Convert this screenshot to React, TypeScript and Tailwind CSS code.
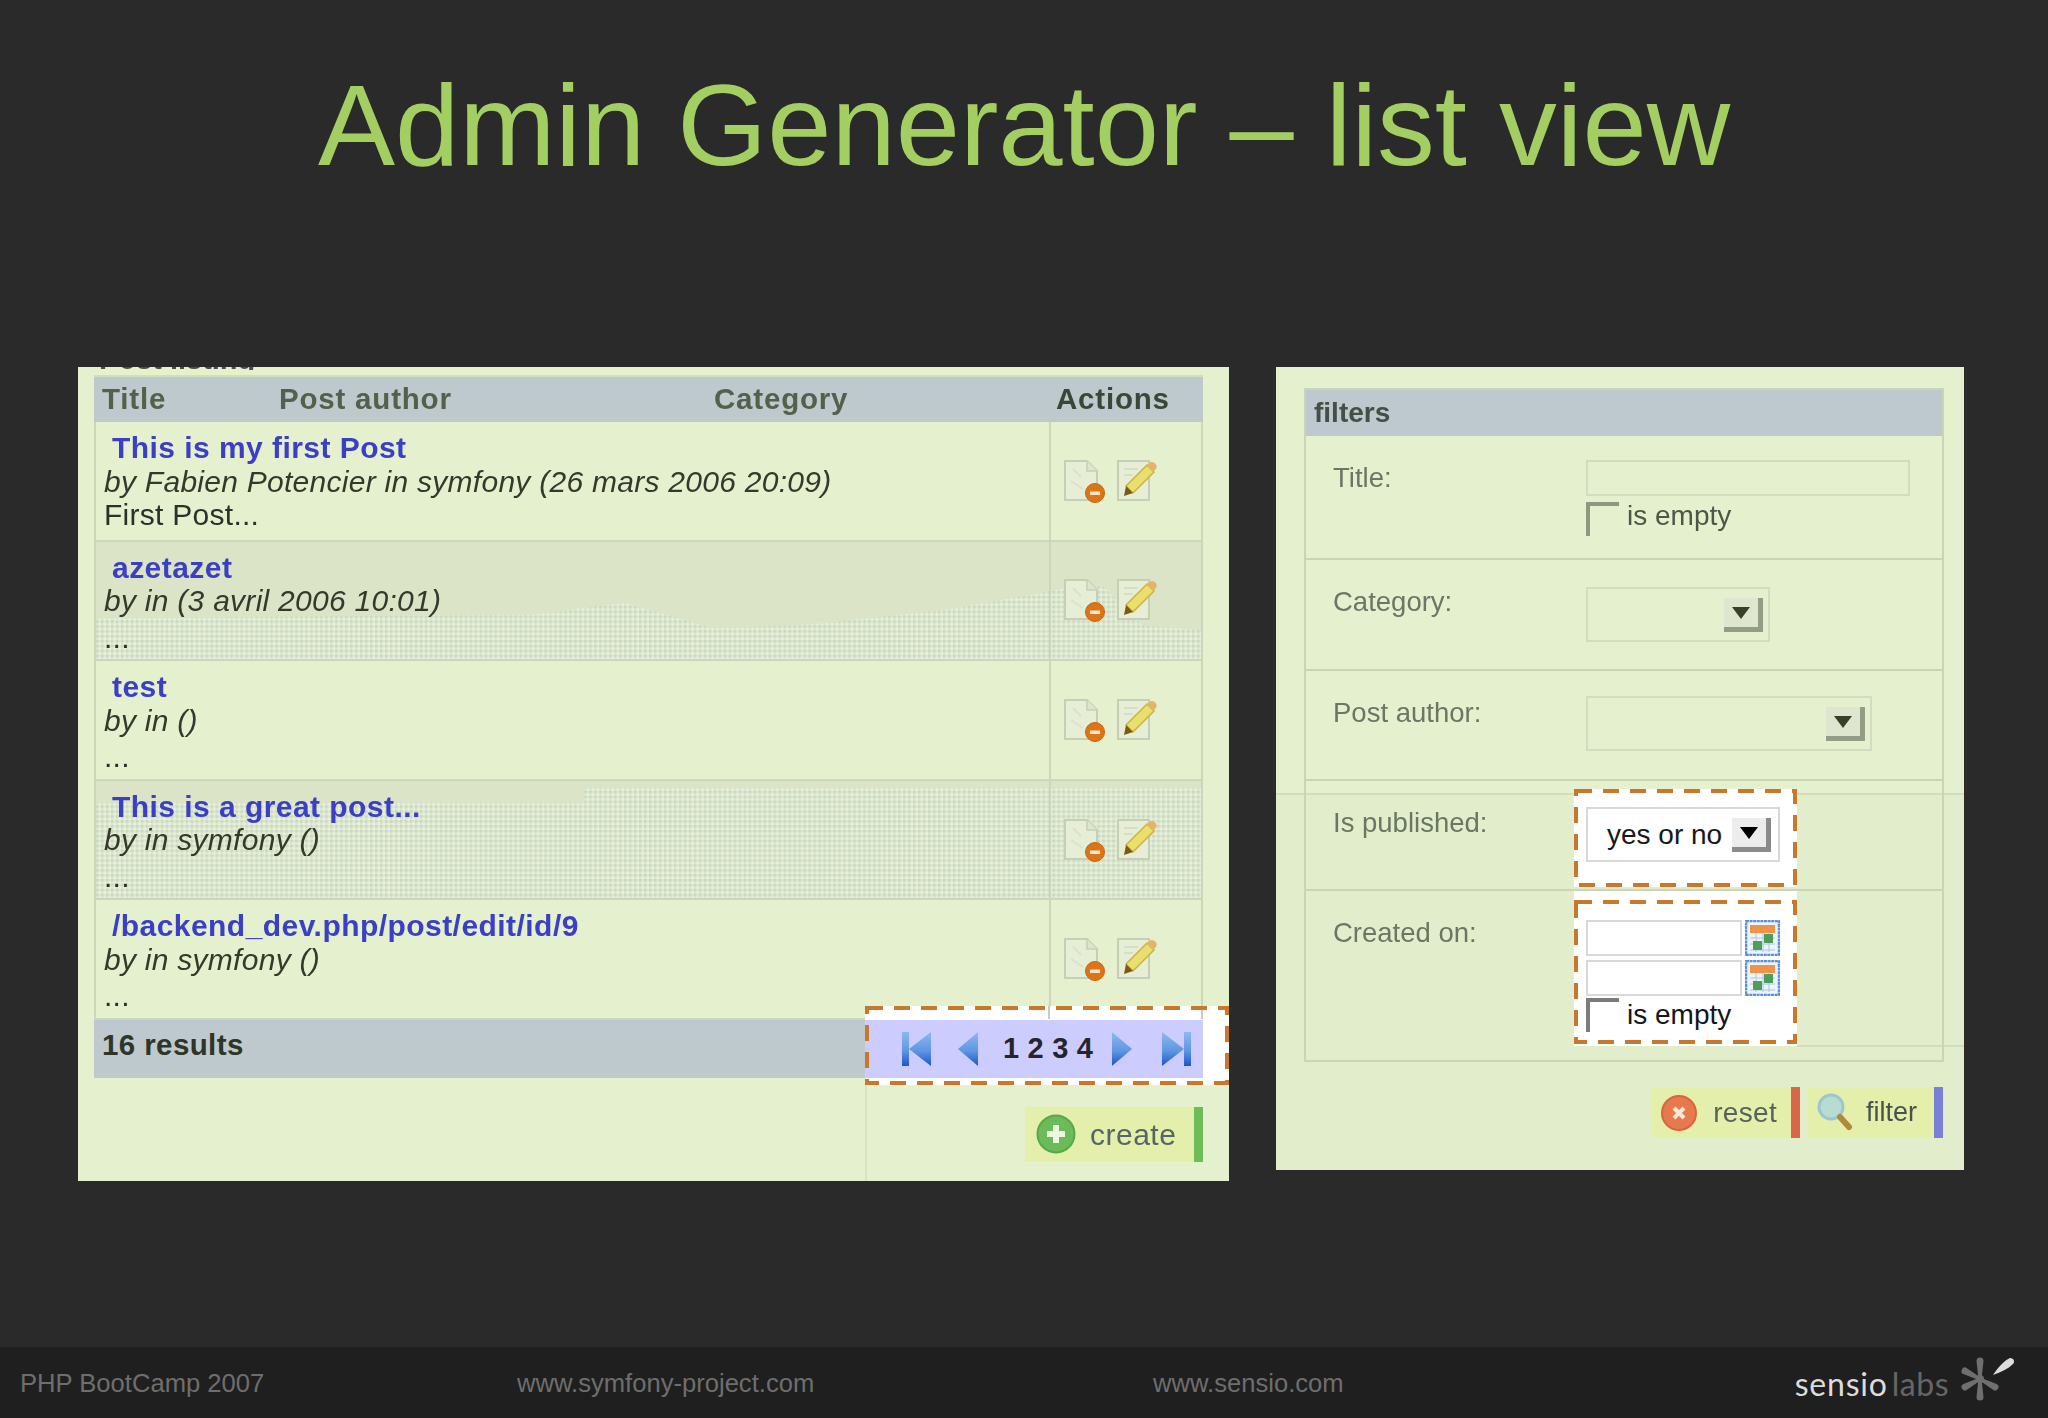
import React from "react";

const posts = [
  { title: "This is my first Post", meta: "by Fabien Potencier in symfony (26 mars 2006 20:09)", body: "First Post...", alt: false },
  { title: "azetazet", meta: "by in (3 avril 2006 10:01)", body: "...", alt: true, dither: "0,78 440,74 530,62 620,88 720,84 860,68 970,48 1010,45 1050,85 1109,90 1109,120 0,120" },
  { title: "test", meta: "by in ()", body: "...", alt: false },
  { title: "This is a great post...", meta: "by in symfony ()", body: "...", alt: true, dither: "0,22 490,22 490,7 1109,7 1109,119 0,119" },
  { title: "/backend_dev.php/post/edit/id/9", meta: "by in symfony ()", body: "...", alt: false },
];

function Dither({ points, id }: { points: string; id: string }) {
  return (
    <svg className="absolute inset-0 h-full w-full" viewBox="0 0 1109 120" preserveAspectRatio="none">
      <defs>
        <pattern id={id} width="5" height="5" patternUnits="userSpaceOnUse">
          <rect width="5" height="5" fill="#dce7cd" />
          <rect width="2.5" height="2.5" fill="#c9d7c0" />
          <rect x="2.5" y="2.5" width="2.5" height="2.5" fill="#e9f1dd" />
        </pattern>
      </defs>
      <polygon points={points} fill={`url(#${id})`} />
    </svg>
  );
}

function DeleteIcon() {
  return (
    <svg width="42" height="44" viewBox="0 0 42 44">
      <path d="M2 2h22l10 10v29H2z" fill="#e6eed6" stroke="#c6ceb6" strokeWidth="2" />
      <path d="M24 2v10h10" fill="#dde5cb" stroke="#c6ceb6" strokeWidth="1.5" />
      <path d="M10 10l8 8M8 22l12 8" stroke="#dae2ca" strokeWidth="2" />
      <circle cx="32" cy="34" r="9.5" fill="#dc7518" stroke="#c9640f" />
      <rect x="27" y="32.5" width="10" height="3.5" fill="#f6e6c8" />
    </svg>
  );
}

function EditIcon() {
  return (
    <svg width="44" height="44" viewBox="0 0 44 44">
      <path d="M2 2h31v39H2z" fill="#e6eed6" stroke="#c6ceb6" strokeWidth="2" />
      <path d="M8 10h14M8 16h9" stroke="#d6dec6" strokeWidth="2" />
      <path d="M10 27L31 6l7 7-21 21z" fill="#e8e06a" stroke="#cdb048" strokeWidth="1.5" />
      <path d="M31 6l3-2.5c2-1 5 0 6 2s1 3-.5 5L37 13z" fill="#e3b56a" />
      <path d="M10 27l7 7-9 3z" fill="#7a5a14" />
    </svg>
  );
}

function PagerIcon({ kind }: { kind: "first" | "prev" | "next" | "last" }) {
  const flip = kind === "next" || kind === "last";
  const withBar = kind === "first" || kind === "last";
  return (
    <svg width={withBar ? 29 : 20} height="36" viewBox={withBar ? "0 0 29 36" : "0 0 20 36"}>
      <defs>
        <linearGradient id={`pg-${kind}`} x1="0" y1="0" x2="0" y2="1">
          <stop offset="0" stopColor="#8cb8ee" />
          <stop offset="0.55" stopColor="#5f97e4" />
          <stop offset="1" stopColor="#1e55c8" />
        </linearGradient>
      </defs>
      <g transform={flip ? (withBar ? "translate(29 0) scale(-1 1)" : "translate(20 0) scale(-1 1)") : undefined} fill={`url(#pg-${kind})`}>
        {withBar ? (
          <>
            <rect x="0" y="1" width="7" height="34" />
            <polygon points="29,1 29,35 7,18" />
          </>
        ) : (
          <polygon points="20,1 20,35 0,18" />
        )}
      </g>
    </svg>
  );
}

function Dashes({ w, h }: { w: number; h: number }) {
  return (
    <svg className="pointer-events-none absolute left-0 top-0" width={w} height={h}>
      <rect x="2" y="2" width={w - 4} height={h - 4} fill="none" stroke="#c8782c" strokeWidth="4" strokeDasharray="16 11" />
    </svg>
  );
}

function SelectBox({ w, white, label }: { w: string; white?: boolean; label?: string }) {
  return (
    <div className={`flex h-[55px] items-center border-2 ${w} ${white ? "border-[#d8d8d8] bg-white pr-[7px]" : "border-[#d2dcc0] pr-[5px]"}`}>
      {label && <span className="pl-[19px] text-[28px] text-[#16181c]">{label}</span>}
      <div className={`ml-auto flex h-[34px] w-[39px] items-center justify-center border-b-[5px] border-r-[5px] ${white ? "border-[#8a8a8a] bg-[#ececec]" : "border-[#959c86] bg-[#dfe6cf]"}`}>
        <svg width="18" height="13" viewBox="0 0 18 13">
          <polygon points="0,1 18,1 9,13" fill={white ? "#000" : "#3a4026"} />
        </svg>
      </div>
    </div>
  );
}

function EmptyCheck({ white, raised }: { white?: boolean; raised?: boolean }) {
  return (
    <div className="flex items-center">
      <div className={`h-[34px] w-[33px] border-l-4 border-t-4 ${white ? "border-[#7c7c7c]" : "border-[#8f9780]"}`} />
      <span className={`ml-2 text-[28px] leading-[34px] ${raised ? "pb-[5px]" : ""} ${white ? "text-[#14161c]" : "text-[#4c5748]"}`}>is empty</span>
    </div>
  );
}

function CalendarIcon() {
  return (
    <svg width="35" height="36" viewBox="0 0 35 36">
      <rect x="1" y="1" width="33" height="34" fill="#eef4fb" stroke="#5d8fd8" strokeWidth="2.5" strokeDasharray="3 0.6" />
      <rect x="5" y="5" width="25" height="8" fill="#f0934a" />
      <path d="M5 18h25M5 24h25M5 30h25M11 13v19M18 13v19M24 13v19" stroke="#aac6e8" strokeWidth="1" />
      <rect x="19" y="14" width="9" height="9" fill="#4c9e58" />
      <rect x="8" y="21" width="9" height="9" fill="#4c9e58" />
    </svg>
  );
}

function ActionButton({ label, width, stripe, textClass, icon }: { label: string; width: string; stripe: string; textClass: string; icon: React.ReactNode }) {
  return (
    <div className={`flex h-[51px] items-center bg-[#e4efab] pl-[9px] ${width}`}>
      {icon}
      <span className={`ml-auto ${textClass}`}>{label}</span>
      <div className={`h-full w-[9px] ${stripe}`} />
    </div>
  );
}

function FilterRow({ label, height, children, last }: { label: string; height: string; children: React.ReactNode; last?: boolean }) {
  return (
    <div className={`grid grid-cols-[253px_1fr] pl-[27px] ${height} ${last ? "" : "border-b-2 border-[#c9d5b6]"}`}>
      <div className="pt-[25px] text-[27.5px] leading-[34px] text-[#6b7664]">{label}</div>
      <div>{children}</div>
    </div>
  );
}

export default function App() {
  return (
    <div className="flex h-[1418px] w-[2048px] flex-col overflow-hidden bg-[#2a2a2a] font-['Liberation_Sans',Arial,sans-serif]">
      <h1 className="h-[367px] pt-[67px] text-center text-[115.5px] font-normal leading-[116px] text-[#a3cf62]">
        Admin Generator – list view
      </h1>

      <div className="flex flex-1 items-start gap-[47px] pl-[78px]">
        {/* list panel */}
        <div className="h-[814px] w-[1151px] overflow-hidden bg-[#e5f0cf]">
          <div className="relative h-full blur-[0.6px]">
            <div className="ml-[21px] h-[3px] overflow-hidden">
              <span className="-mt-[23px] block text-[29px] font-bold leading-[30px] text-[#44503e]">Post listing</span>
            </div>
            <div className="ml-4 mt-[5px] w-[1109px] border-t-2 border-[#d3debb]">
              <div className="grid h-[45px] grid-cols-[177px_435px_342px_147px] items-center bg-[#bdc9cc] pl-2 text-[29.5px] font-bold tracking-[0.8px] text-[#55604c]">
                <span>Title</span>
                <span>Post author</span>
                <span>Category</span>
                <span className="text-[#3a4638]">Actions</span>
              </div>
              {posts.map((post, i) => (
                <div
                  key={i}
                  className={`relative grid h-[119.6px] grid-cols-[953px_154px] border-x-2 border-b-2 border-[#ccd7ba] ${post.alt ? "bg-[#dbe4c7]" : ""}`}
                >
                  {post.dither && <Dither points={post.dither} id={`dither-${i}`} />}
                  <div className="relative pl-2 pt-[9px] text-[30px] leading-[33.5px] tracking-[0.27px] text-[#2b3028]">
                    <div className="pl-2 font-bold tracking-[0.45px] text-[#3b3fc6]">{post.title}</div>
                    <div className="italic text-[#35392b]">{post.meta}</div>
                    <div className={post.body === "..." ? "pt-[3px]" : ""}>{post.body}</div>
                  </div>
                  <div className="relative flex items-center gap-[11px] border-l-2 border-[#ccd7ba] pl-3">
                    <DeleteIcon />
                    <EditIcon />
                  </div>
                </div>
              ))}
              <div className="relative z-10 flex h-[58px] bg-[#bdc9cc]">
                <div className="w-[771px] pl-2 pt-[8px] text-[29.5px] font-bold leading-[34px] tracking-[0.4px] text-[#2d3628]">16 results</div>
                <div className="flex flex-1 items-center bg-[#ccccff] pl-[37px]">
                  <PagerIcon kind="first" />
                  <div className="ml-[27px]">
                    <PagerIcon kind="prev" />
                  </div>
                  <div className="ml-[25px] flex w-[90px] justify-between text-[29px] font-bold text-[#23262c]">
                    <span>1</span>
                    <span>2</span>
                    <span>3</span>
                    <span>4</span>
                  </div>
                  <div className="ml-[19px]">
                    <PagerIcon kind="next" />
                  </div>
                  <div className="ml-[30px]">
                    <PagerIcon kind="last" />
                  </div>
                </div>
              </div>
            </div>
            <div className="relative z-10 ml-[947px] mt-[29px] flex w-[178px] justify-end">
              <div className="flex h-[55px] w-full items-center bg-[#e4efab] pl-[11px]">
                <svg width="40" height="40" viewBox="0 0 40 40">
                  <circle cx="20" cy="20" r="18.5" fill="#6cbb5a" stroke="#5aa748" strokeWidth="2" />
                  <path d="M20 11v18M11 20h18" stroke="#eef6df" strokeWidth="6" />
                </svg>
                <span className="ml-[14px] text-[30px] tracking-[0.5px] text-[#566663]">create</span>
                <div className="ml-auto h-full w-[9px] bg-[#6cbd55]" />
              </div>
            </div>

            {/* highlighted pager */}
            <div className="absolute left-[787px] top-[639px] h-[79px] w-[364px] bg-white">
              <div className="absolute left-[183px] top-0 h-[13px] w-[2px] bg-[#c8ccbe]" />
              <div className="absolute left-[336px] top-0 h-[13px] w-[2px] bg-[#c8ccbe]" />
            </div>
            <div className="absolute left-[787px] top-[639px] z-20 h-[79px] w-[364px]">
              <Dashes w={364} h={79} />
            </div>
            <div className="absolute bottom-0 left-[787px] top-[718px] w-[2px] bg-[#d8e3c4]" />
          </div>
        </div>

        {/* filters panel */}
        <div className="h-[803px] w-[688px] overflow-hidden bg-[#e5f0cf]">
          <div className="relative h-full pl-[28px] pt-[21px] blur-[0.6px]">
            <div className="absolute inset-x-0 bottom-0 top-[426px] border-t-2 border-[#cfe0b8] bg-[#e2eecb]" />
            <div className="absolute left-[521px] right-0 top-[678px] h-[2px] bg-[#cfe0b8]" />
            <div className="relative w-[640px] border-2 border-[#c9d5b6]">
              <div className="flex h-[46px] items-center bg-[#bdc9cf] pl-2 text-[28px] font-bold text-[#454f46]">filters</div>
              <FilterRow label="Title:" height="h-[124px]">
                <div className="pt-[24px]">
                  <div className="h-[36px] w-[324px] border-2 border-[#d2dcc0]" />
                  <div className="mt-[3px]">
                    <EmptyCheck raised />
                  </div>
                </div>
              </FilterRow>
              <FilterRow label="Category:" height="h-[111px]">
                <div className="pt-[27px]">
                  <SelectBox w="w-[184px]" />
                </div>
              </FilterRow>
              <FilterRow label="Post author:" height="h-[110px]">
                <div className="pt-[25px]">
                  <SelectBox w="w-[286px]" />
                </div>
              </FilterRow>
              <FilterRow label="Is published:" height="h-[110px]">
                <div className="relative z-10 -ml-3 mt-[8px] h-[98px] w-[223px] bg-white pl-3 pt-[18px]">
                  <Dashes w={223} h={98} />
                  <SelectBox w="w-[194px]" white label="yes or no" />
                </div>
              </FilterRow>
              <FilterRow label="Created on:" height="h-[169px]" last>
                <div className="relative z-10 -ml-3 h-[155px] w-[223px] bg-white pl-3 pt-[29px]">
                  <div className="absolute left-0 top-[9px]">
                    <Dashes w={223} h={144} />
                  </div>
                  <div className="flex items-center gap-[3px]">
                    <div className="h-[36px] w-[156px] border-2 border-[#d8d8d8]" />
                    <CalendarIcon />
                  </div>
                  <div className="mt-[4px] flex items-center gap-[3px]">
                    <div className="h-[36px] w-[156px] border-2 border-[#d8d8d8]" />
                    <CalendarIcon />
                  </div>
                  <div className="mt-[2px]">
                    <EmptyCheck white />
                  </div>
                </div>
              </FilterRow>
            </div>
            <div className="relative mr-[21px] mt-[25px] flex justify-end gap-2">
              <ActionButton
                label="reset"
                width="w-[148px]"
                stripe="ml-[14px] bg-[#d8674a]"
                textClass="text-[28px] tracking-[0.3px] text-[#57625a]"
                icon={
                  <svg width="36" height="36" viewBox="0 0 36 36">
                    <circle cx="18" cy="18" r="17" fill="#e67a4e" stroke="#d9653c" strokeWidth="2" />
                    <path d="M13 13l10 10M23 13L13 23" stroke="#f6e8d6" strokeWidth="4" />
                  </svg>
                }
              />
              <ActionButton
                label="filter"
                width="w-[135px]"
                stripe="ml-[17px] bg-[#7a80d6]"
                textClass="text-[27px] text-[#46524a]"
                icon={
                  <svg width="36" height="40" viewBox="0 0 36 40">
                    <circle cx="14" cy="14" r="12" fill="#b9dcd2" stroke="#9cc7cc" strokeWidth="3" />
                    <path d="M23 24l9 10" stroke="#b08a3c" strokeWidth="6" strokeLinecap="round" />
                  </svg>
                }
              />
            </div>
          </div>
        </div>
      </div>

      <footer className="flex h-[71px] items-center bg-[#1f1f1f] pl-5 pt-[2px] text-[25.6px] text-[#6e6e6e]">
        <span className="w-[497px]">PHP BootCamp 2007</span>
        <span className="w-[636px]">www.symfony-project.com</span>
        <span>www.sensio.com</span>
        <div className="ml-auto flex items-center pr-[33px] font-['Lato',sans-serif] text-[32px] leading-none">
          <span className="tracking-[0.8px] text-[#dcdcdc]">sensio</span>
          <span className="ml-[4px] tracking-[0.5px] text-[#666]">labs</span>
          <svg className="mb-[9px] ml-[8px]" width="58" height="50" viewBox="0 0 58 50">
            <g fill="#6f6f6f">
              <path d="M21.5 25l-2-18a3.5 3.5 0 0 1 7 0l-2 18z" />
              <path d="M21.5 25l-2-18a3.5 3.5 0 0 1 7 0l-2 18z" transform="rotate(180 23 25)" />
              <path d="M21.5 25l-2-17a3.5 3.5 0 0 1 7 0l-2 17z" transform="rotate(-62 23 25)" />
              <path d="M21.5 25l-2-17a3.5 3.5 0 0 1 7 0l-2 17z" transform="rotate(-118 23 25)" />
              <path d="M21.5 25l-2-17a3.5 3.5 0 0 1 7 0l-2 17z" transform="rotate(118 23 25)" />
              <circle cx="23" cy="25" r="4" />
            </g>
            <path d="M36 21C42 12 48 6 53 4c4 0 5 4 3 6-5 5-12 8-20 11z" fill="#dcdcdc" />
          </svg>
        </div>
      </footer>
    </div>
  );
}
